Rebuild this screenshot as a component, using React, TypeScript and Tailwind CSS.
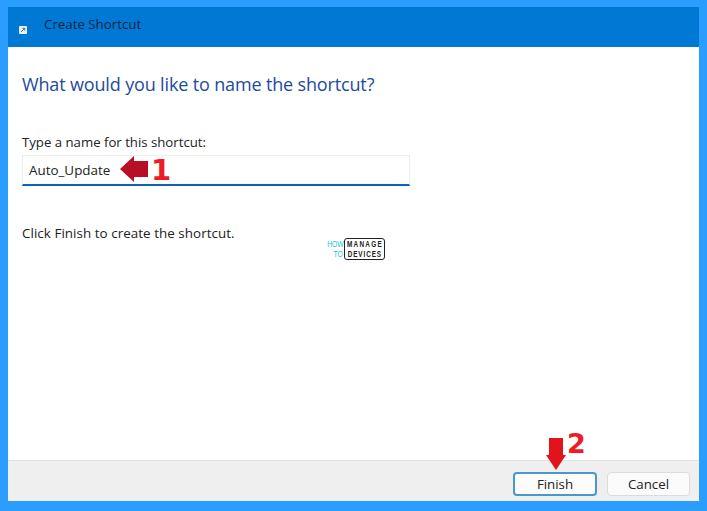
export default function App() {
  return (
    <div className="w-[707px] h-[511px] bg-[#2a9dff] pt-[7px] pl-[8px] pr-[8px] pb-[10px] overflow-hidden font-['Open_Sans',sans-serif]">
      <div className="w-full h-full flex flex-col bg-white">
        <div className="h-[40px] bg-[#0078d4] flex items-start pl-[11px] shrink-0">
          <div className="w-[8px] h-[8px] mt-[19px] bg-[#e8f2fb] rounded-[1px] flex items-center justify-center">
            <svg width="6" height="6" viewBox="0 0 6 6"><path d="M1 5 L4.5 1.5 M2.5 1.3 H4.7 V3.5" stroke="#2a6fb5" strokeWidth="1" fill="none" /></svg>
          </div>
          <span className="ml-[17px] mt-[8px] text-[13.3px] leading-[18px] text-[#0b2447]">Create Shortcut</span>
        </div>
        <div className="flex-1 flex flex-col pl-[14px]">
          <h1 className="mt-[25px] text-[18px] leading-[25px] font-normal text-[#1c4ba0] tracking-[-0.15px]">What would you like to name the shortcut?</h1>
          <p className="mt-[36px] text-[13.2px] leading-[18px] text-[#222]">Type a name for this shortcut:</p>
          <div className="relative mt-[4px] w-[388px] h-[31px] border border-[#eeeeee] border-b-2 border-b-[#0f62b0] flex items-center pl-[6px] text-[13.4px] text-[#222]">
            Auto_Update
            <svg className="absolute left-[97px] top-[0px]" width="28" height="26" viewBox="0 0 28 26">
              <path d="M0 13 L14 0 V5 H28 V21 H14 V26 Z" fill="#b80f24" />
            </svg>
            <span className="absolute left-[128px] top-[-2px] text-[29px] leading-[32px] font-bold text-[#ee1c25] font-['DejaVu_Sans',sans-serif]">1</span>
          </div>
          <p className="mt-[38px] text-[13.4px] leading-[18px] tracking-[0.05px] text-[#222]">Click Finish to create the shortcut.</p>
          <div className="mt-[-4px] ml-[306px] flex items-center">
            <div className="w-[16px] flex flex-col items-end text-[8.5px] leading-[10px] text-[#2bc0ee] font-['Liberation_Sans',sans-serif]">
              <span className="scale-x-[0.8] origin-right whitespace-nowrap">HOW</span>
              <span className="scale-x-[0.8] origin-right whitespace-nowrap pr-[1px]">TO</span>
            </div>
            <div className="w-[41px] h-[22px] border border-[#222] rounded-[3px] flex flex-col items-center justify-center text-[8.5px] leading-[10px] font-bold text-[#222] font-['Liberation_Sans',sans-serif] overflow-hidden">
              <span className="scale-x-[0.75] tracking-[1.7px] whitespace-nowrap">MANAGE</span>
              <span className="scale-x-[0.75] tracking-[1.2px] whitespace-nowrap">DEVICES</span>
            </div>
          </div>
        </div>
        <div className="relative h-[41px] shrink-0 bg-[#efefef] border-t border-[#e2e2e2] flex items-start justify-end gap-[10px] pr-[9px] pt-[11px]">
          <button className="w-[84px] h-[24px] rounded-[4px] border-2 border-[#4a97cc] bg-[#fcfcfc] text-[13.3px] leading-[18px] text-[#222]">Finish</button>
          <button className="w-[83px] h-[24px] rounded-[4px] border border-[#dcdcdc] bg-[#fbfbfb] text-[13.3px] leading-[18px] text-[#222]">Cancel</button>
          <svg className="absolute left-[538px] top-[-23px]" width="20" height="32" viewBox="0 0 20 32">
            <path d="M3 0 H17 V17 H20 L10 32 L0 17 H3 Z" fill="#e3131b" />
          </svg>
          <span className="absolute left-[559px] top-[-33px] text-[27px] leading-[32px] font-bold text-[#ee1c25] font-['DejaVu_Sans',sans-serif]">2</span>
        </div>
      </div>
    </div>
  );
}
